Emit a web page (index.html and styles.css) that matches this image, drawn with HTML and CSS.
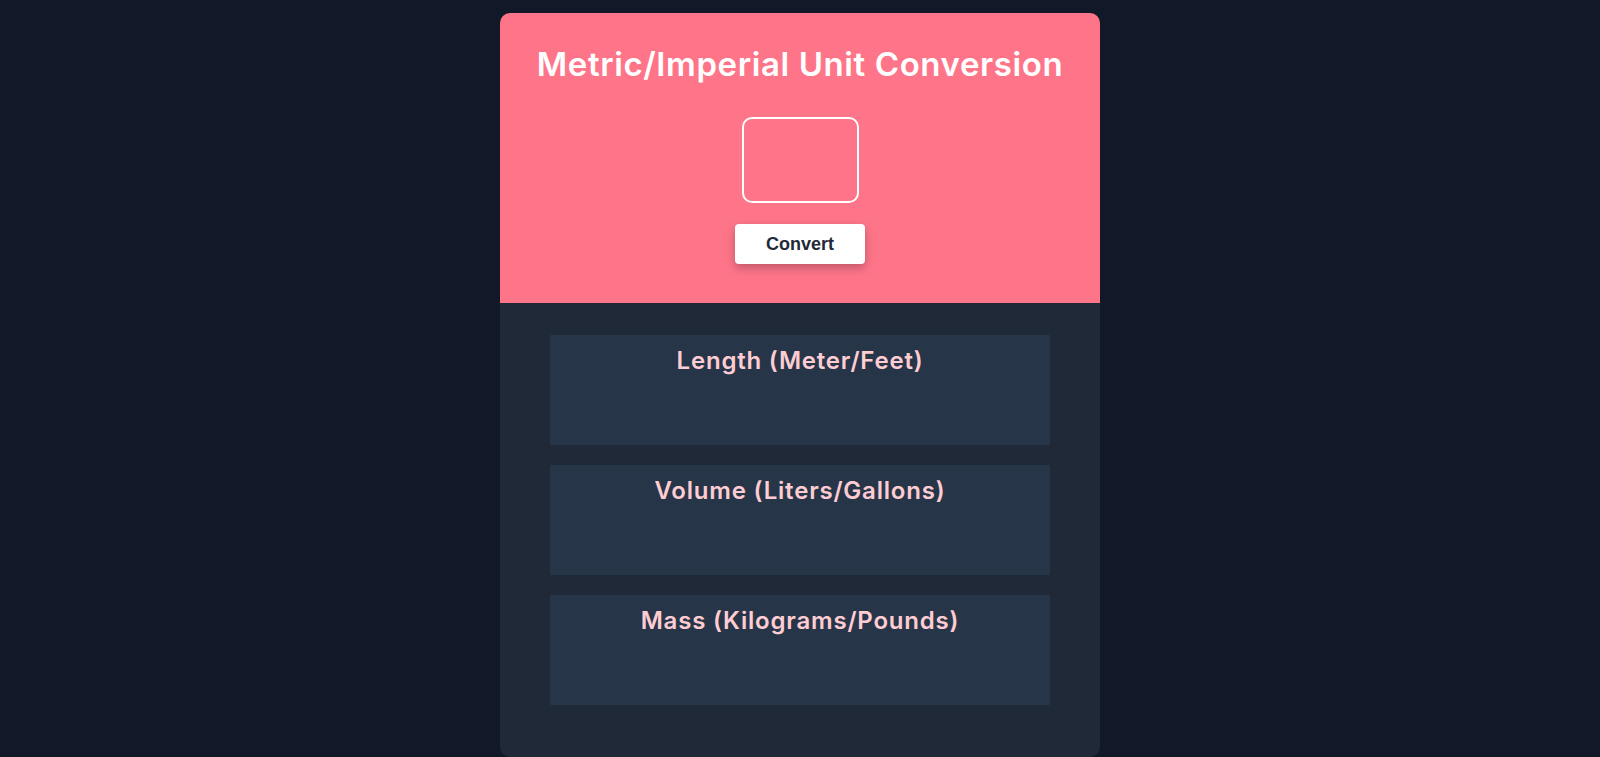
FILE: index.html
```html
<!DOCTYPE html>
<html lang="en">
<head>
<meta charset="utf-8">
<title>Metric/Imperial Unit Conversion</title>
<link rel="stylesheet" href="styles.css">
</head>
<body>
<main class="card">
  <header class="top">
    <h1 class="title">Metric/Imperial Unit Conversion</h1>
    <input class="num" type="text" aria-label="Value">
    <button class="btn" type="button">Convert</button>
  </header>
  <section class="results">
    <div class="result"><h2 class="result-title">Length (Meter/Feet)</h2></div>
    <div class="result"><h2 class="result-title">Volume (Liters/Gallons)</h2></div>
    <div class="result"><h2 class="result-title">Mass (Kilograms/Pounds)</h2></div>
  </section>
</main>
</body>
</html>
```
FILE: styles.css
```css
* { box-sizing: border-box; }
html, body { margin: 0; padding: 0; }
body {
  background: #111827;
  font-family: Inter, "Open Sans", sans-serif;
  min-height: 757px;
}
.card {
  width: 600px;
  margin: 13px auto 0;
  border-radius: 10px;
  overflow: hidden;
  background: #1f2937;
}
.top {
  background: #fe7589;
  display: flex;
  flex-direction: column;
  align-items: center;
  padding: 31px 0 39px;
}
.title {
  margin: 0 0 33px;
  color: #ffffff;
  font-size: 33px;
  font-weight: 600;
  line-height: 40px;
  letter-spacing: 0.6px;
}
.num {
  width: 117px;
  height: 86px;
  border: 2px solid #ffffff;
  border-radius: 10px;
  background: transparent;
  outline: none;
  color: #fff;
  font-size: 24px;
  text-align: center;
}
.btn {
  margin-top: 21px;
  width: 130px;
  height: 40px;
  background: #ffffff;
  border: none;
  border-radius: 4px;
  box-shadow: 0 4px 10px rgba(0,0,0,0.25);
  font-family: "Liberation Sans", Arial, sans-serif;
  font-weight: 700;
  font-size: 18px;
  color: #1f2937;
}
.results {
  padding: 32px 50px;
}
.result {
  height: 110px;
  margin-bottom: 20px;
  background: #273549;
  padding-top: 10px;
}
.result-title {
  margin: 0;
  text-align: center;
  color: #fecdd3;
  font-size: 24px;
  font-weight: 600;
  line-height: 32px;
  letter-spacing: 0.8px;
}
```
